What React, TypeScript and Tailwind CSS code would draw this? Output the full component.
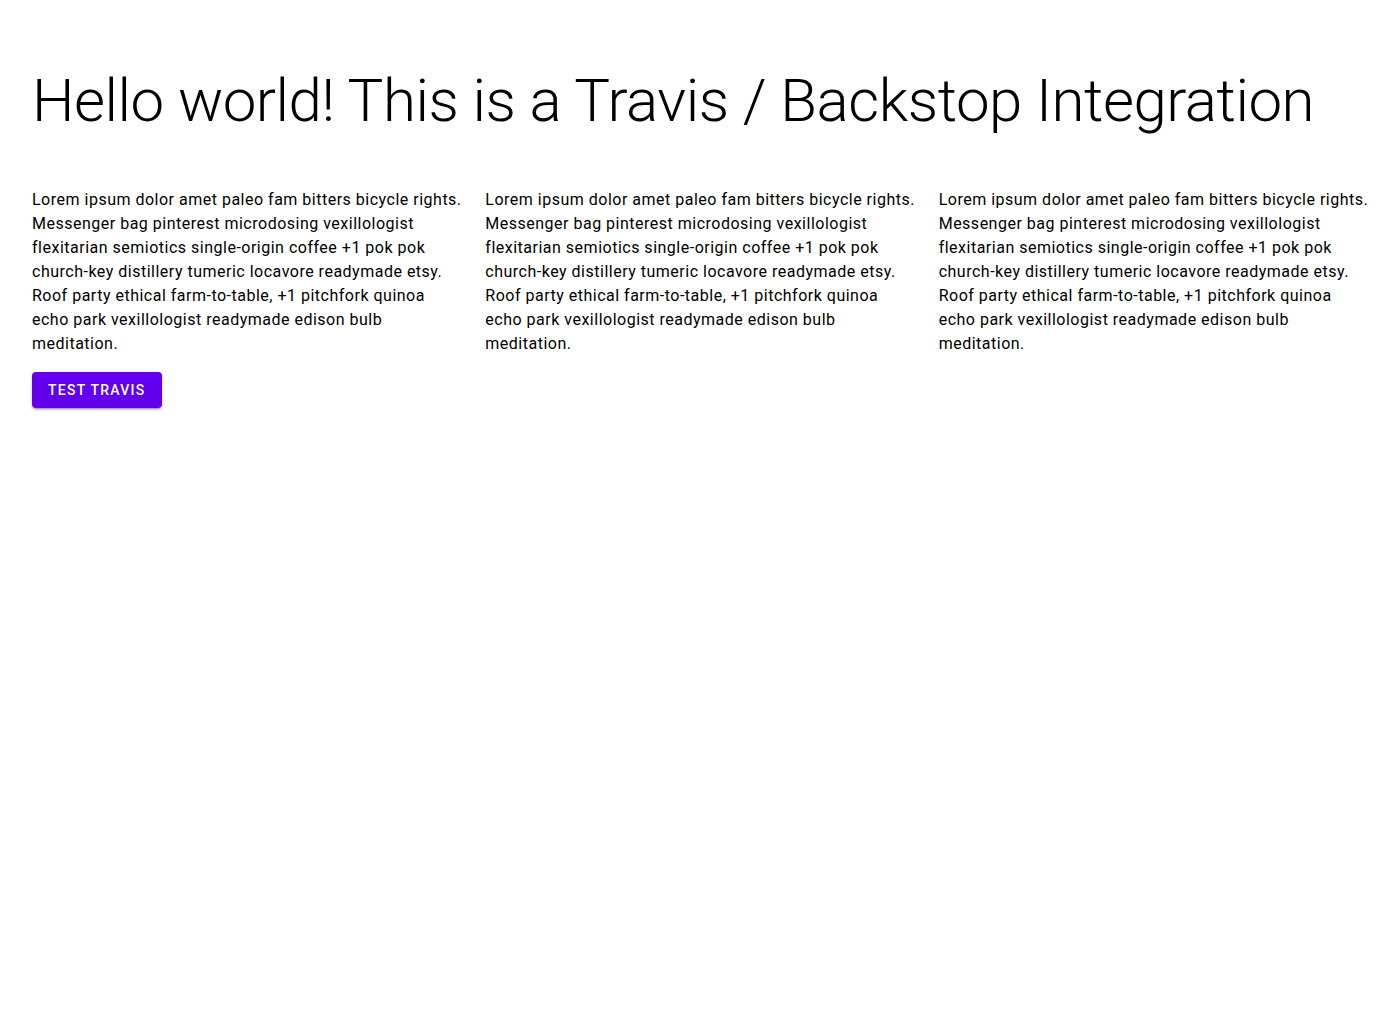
const LOREM =
  "Lorem ipsum dolor amet paleo fam bitters bicycle rights. Messenger bag pinterest microdosing vexillologist flexitarian semiotics single-origin coffee +1 pok pok church-key distillery tumeric locavore readymade etsy. Roof party ethical farm-to-table, +1 pitchfork quinoa echo park vexillologist readymade edison bulb meditation.";

export default function App() {
  return (
    <div className="min-h-screen bg-white px-8 pt-[71px] font-['Roboto',sans-serif] text-black antialiased">
      <h1 className="text-[60px] leading-[60px] font-light tracking-[-0.47px]">
        Hello world! This is a Travis / Backstop Integration
      </h1>

      <div className="mt-[57px] grid grid-cols-3 gap-x-6">
        <div>
          <p className="-mr-[3px] text-base leading-6 tracking-[0.5px]">{LOREM}</p>
          <button className="mt-4 flex h-9 items-center rounded bg-[#6200ee] px-4 text-sm font-medium uppercase tracking-[1.25px] text-white shadow-[0_3px_1px_-2px_rgba(0,0,0,0.2),0_2px_2px_0_rgba(0,0,0,0.14),0_1px_5px_0_rgba(0,0,0,0.12)]">
            Test Travis
          </button>
        </div>
        <div>
          <p className="-mr-[3px] text-base leading-6 tracking-[0.5px]">{LOREM}</p>
        </div>
        <div>
          <p className="-mr-[3px] text-base leading-6 tracking-[0.5px]">{LOREM}</p>
        </div>
      </div>
    </div>
  );
}
